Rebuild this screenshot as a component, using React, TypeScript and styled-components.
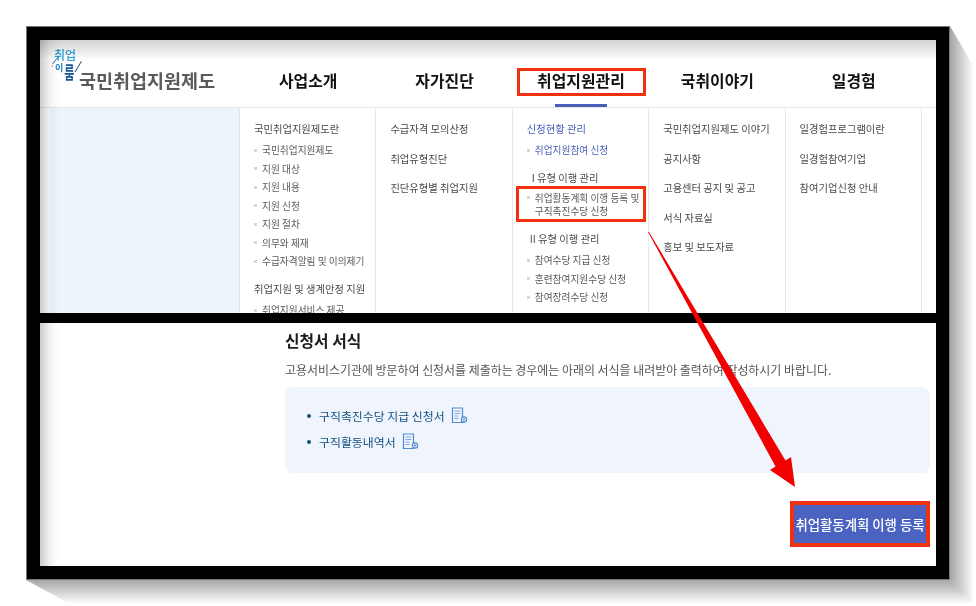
import React from "react";
import styled, { createGlobalStyle, css } from "styled-components";

const Global = createGlobalStyle`
  html, body { margin: 0; padding: 0; background: #fff; }
  body { font-family: "Noto Sans CJK KR", "Noto Sans", sans-serif; overflow: hidden; }
`;

const Page = styled.div`
  position: relative;
  width: 976px;
  height: 606px;
  padding: 26px;
  box-sizing: border-box;
  overflow: hidden;
`;

const RightShadow = styled.div`
  position: absolute;
  left: 950px;
  top: 26px;
  width: 24px;
  height: 578px;
  background: linear-gradient(to right, #a6a6a6, #e8e8e8 75%, #fff);
  clip-path: polygon(0 0, 100% 41px, 100% 100%, 0 554px);
`;

const BottomShadow = styled.div`
  position: absolute;
  left: 26px;
  top: 580px;
  width: 948px;
  height: 24px;
  background: linear-gradient(to bottom, #a6a6a6, #e8e8e8 75%, #fff);
  clip-path: polygon(0 0, 924px 0, 100% 100%, 44px 100%);
`;

const Frame = styled.div`
  position: relative;
  width: 924px;
  height: 554px;
  box-sizing: border-box;
  border: 14px solid #000;
  outline: 1px solid #777;
  outline-offset: -1px;
  display: flex;
  flex-direction: column;
  background: #fff;
`;

const Section = styled.section<{ $top?: boolean }>`
  position: relative;
  overflow: hidden;
  background: #fff;
  filter: blur(0.45px);
  ${(p) =>
    p.$top
      ? css`
          height: 273px;
          flex: none;
        `
      : css`
          flex: 1;
        `}
  &::after {
    content: "";
    position: absolute;
    inset: 0;
    pointer-events: none;
    background: linear-gradient(to right, rgba(0, 0, 0, 0.2), rgba(0, 0, 0, 0.05) 10px, rgba(0, 0, 0, 0) 19px)
      ${(p) => (p.$top ? ", linear-gradient(to bottom, rgba(0,0,0,0.18), rgba(0,0,0,0) 20px)" : "")};
  }
`;

const Divider = styled.div`
  height: 10px;
  flex: none;
  background: #000;
`;

const grid = css`
  display: grid;
  grid-template-columns: 200px repeat(5, 136.4px);
`;

const Header = styled.header`
  ${grid}
  height: 68px;
  box-sizing: border-box;
  border-bottom: 1px solid #e6e6e6;
`;

const Logo = styled.div`
  display: flex;
  align-items: flex-end;
  padding-left: 12px;
  height: 67px;
  box-sizing: border-box;
  padding-bottom: 16px;
`;

const LogoMark = styled.div`
  position: relative;
  width: 27px;
  height: 36px;
  display: flex;
  flex-direction: column;
  align-items: flex-start;
  margin-bottom: 7px;
  flex: none;
`;

const MarkTop = styled.span`
  font-size: 12px;
  line-height: 14px;
  font-weight: 500;
  color: #2ba3d8;
  padding-left: 2px;
  white-space: nowrap;
`;

const MarkBottom = styled.span`
  display: flex;
  align-items: flex-start;
  margin-top: 1px;
  font-size: 9px;
  line-height: 10px;
  font-weight: 700;
  color: #1f7fc0;
  padding-left: 3px;
  white-space: nowrap;
`;

const MarkTall = styled.span`
  display: block;
  font-size: 11px;
  line-height: 10px;
  color: #17518f;
  transform: scaleY(1.6);
  transform-origin: 50% 0;
  margin-left: 1px;
`;

const MarkSlash = styled.svg`
  position: absolute;
  left: 0;
  top: 0;
`;

const LogoText = styled.span`
  font-size: 18.5px;
  line-height: 22px;
  font-weight: 700;
  color: #5a5a5a;
  white-space: nowrap;
`;

const NavItem = styled.div<{ $active?: boolean }>`
  position: relative;
  height: 67px;
  box-sizing: border-box;
  padding-top: 13px;
  display: flex;
  align-items: center;
  justify-content: center;
  font-size: 15.9px;
  font-weight: 700;
  color: #111;
  ${(p) =>
    p.$active &&
    css`
      &::after {
        content: "";
        position: absolute;
        left: 42px;
        bottom: 0;
        width: 52px;
        height: 3px;
        background: #4a5fb8;
      }
    `}
`;

const Menu = styled.div`
  ${grid}
  height: 205px;
`;

const Gutter = styled.div`
  padding-left: 10px;
  border-right: 1px solid #e6e6e6;
  &::before {
    content: "";
    display: block;
    height: 100%;
    background: #eef4fc;
  }
`;

const Column = styled.div`
  box-sizing: border-box;
  padding: 12px 0 0 14px;
  border-right: 1px solid #e9e9e9;
`;

const Title = styled.div<{ $blue?: boolean; $indent?: number; $gap?: number }>`
  height: 18px;
  line-height: 18px;
  font-size: 10.3px;
  color: ${(p) => (p.$blue ? "#4a5fb8" : "#4a4a4a")};
  white-space: nowrap;
  margin-left: ${(p) => p.$indent ?? 0}px;
  margin-top: ${(p) => p.$gap ?? 0}px;
`;

const SubList = styled.ul`
  list-style: none;
  margin: 3px 0 0;
  padding: 0;
`;

const SubItem = styled.li<{ $blue?: boolean; $multi?: boolean }>`
  display: flex;
  gap: 5px;
  min-height: 18.5px;
  line-height: ${(p) => (p.$multi ? "12.5px" : "18.5px")};
  padding: ${(p) => (p.$multi ? "2px 0 3px" : "0")};
  font-size: 9.7px;
  color: ${(p) => (p.$blue ? "#4a5fb8" : "#5a5a5a")};
  white-space: nowrap;
  &::before {
    content: "";
    flex: none;
    width: 3px;
    height: 3px;
    margin-top: ${(p) => (p.$multi ? "4px" : "7.5px")};
    background: #d8d8d8;
  }
`;

const Highlight = styled.div<{ $x: number; $y: number; $w: number; $h: number }>`
  position: absolute;
  left: ${(p) => p.$x}px;
  top: ${(p) => p.$y}px;
  width: ${(p) => p.$w}px;
  height: ${(p) => p.$h}px;
  box-sizing: border-box;
  border: 3px solid #f0300f;
  pointer-events: none;
`;

const ArrowLayer = styled.svg`
  position: absolute;
  left: 0;
  top: 0;
  pointer-events: none;
`;

const Body = styled.div`
  padding: 8px 6px 0 245px;
  display: flex;
  flex-direction: column;
`;

const Heading = styled.h2`
  margin: 0;
  font-size: 15.8px;
  line-height: 20px;
  font-weight: 700;
  color: #1c1c1c;
`;

const Lead = styled.p`
  margin: 10px 0 0;
  font-size: 11.94px;
  line-height: 18px;
  color: #555;
  white-space: nowrap;
`;

const Notice = styled.div`
  margin-top: 8px;
  height: 86px;
  box-sizing: border-box;
  border-radius: 8px;
  background: #eff4fd;
  padding: 17px 0 0 22px;
  display: flex;
  flex-direction: column;
  gap: 3px;
`;

const NoticeRow = styled.div`
  display: flex;
  align-items: center;
  height: 23px;
  font-size: 11.9px;
  color: #14507f;
  white-space: nowrap;
  &::before {
    content: "";
    width: 4px;
    height: 4px;
    border-radius: 50%;
    background: #14507f;
    margin-right: 8px;
  }
`;

const DocIcon = styled.svg`
  margin-left: 6px;
  flex: none;
`;

const Actions = styled.div`
  display: flex;
  justify-content: flex-end;
  margin-top: 28px;
`;

const PrimaryButton = styled.button`
  width: 140px;
  height: 46px;
  box-sizing: border-box;
  border: 4px solid #f0300f;
  background: #4a63c0;
  color: #fff;
  font-family: inherit;
  font-size: 13.4px;
  font-weight: 500;
  padding: 0;
  white-space: nowrap;
`;

const Doc = () => (
  <DocIcon width="17" height="17" viewBox="0 0 17 17" fill="none" stroke="#4f8ad2" strokeWidth="1.2">
    <path d="M1.5 1h10v14.5h-10z" />
    <path d="M3.5 4h6M3.5 6.5h6M3.5 9h4M3.5 11.5h4" stroke="#7fa8da" strokeWidth="1" />
    <circle cx="13" cy="12.5" r="2.6" fill="#eff4fd" />
    <circle cx="13" cy="12.5" r="1" fill="#4f8ad2" stroke="none" />
  </DocIcon>
);

const nav = ["사업소개", "자가진단", "취업지원관리", "국취이야기", "일경험"];

const col1a = ["국민취업지원제도", "지원 대상", "지원 내용", "지원 신청", "지원 절차", "의무와 제재", "수급자격알림 및 이의제기"];
const col2 = ["수급자격 모의산정", "취업유형진단", "진단유형별 취업지원"];
const col4 = ["국민취업지원제도 이야기", "공지사항", "고용센터 공지 및 공고", "서식 자료실", "홍보 및 보도자료"];
const col5 = ["일경험프로그램이란", "일경험참여기업", "참여기업신청 안내"];
const col3b = ["참여수당 지급 신청", "훈련참여지원수당 신청", "참여장려수당 신청"];

const Links = ({ items }: { items: string[] }) => (
  <Column>
    {items.map((t, i) => (
      <Title key={t} $gap={i ? 11.5 : 0}>
        {t}
      </Title>
    ))}
  </Column>
);

export default function App() {
  return (
    <Page>
      <Global />
      <RightShadow />
      <BottomShadow />
      <Frame>
        <Section $top>
          <Header>
            <Logo>
              <LogoMark>
                <MarkTop>취업</MarkTop>
                <MarkBottom>
                  이<MarkTall>룸</MarkTall>
                </MarkBottom>
                <MarkSlash width="30" height="30" viewBox="0 0 30 30" fill="none">
                  <path d="M0.5 16 L7 8" stroke="#1f6fb5" strokeWidth="1" />
                  <path d="M23 24 L29 14" stroke="#17518f" strokeWidth="1" />
                  <circle cx="0" cy="18" r="1" fill="#e8833a" />
                  <circle cx="29" cy="14" r="0.8" fill="#e0503a" />
                </MarkSlash>
              </LogoMark>
              <LogoText>국민취업지원제도</LogoText>
            </Logo>
            {nav.map((n, i) => (
              <NavItem key={n} $active={i === 2}>
                {n}
              </NavItem>
            ))}
          </Header>
          <Menu>
            <Gutter />
            <Column>
              <Title>국민취업지원제도란</Title>
              <SubList>
                {col1a.map((t) => (
                  <SubItem key={t}>{t}</SubItem>
                ))}
              </SubList>
              <Title $gap={9.5}>취업지원 및 생계안정 지원</Title>
              <SubList>
                <SubItem>취업지원서비스 제공</SubItem>
              </SubList>
            </Column>
            <Links items={col2} />
            <Column>
              <Title $blue>신청현황 관리</Title>
              <SubList>
                <SubItem $blue>취업지원참여 신청</SubItem>
              </SubList>
              <Title $gap={9.5} $indent={5}>
                I 유형 이행 관리
              </Title>
              <SubList>
                <SubItem $multi>
                  <span>
                    취업활동계획 이행 등록 및
                    <br />
                    구직촉진수당 신청
                  </span>
                </SubItem>
              </SubList>
              <Title $gap={10} $indent={3}>
                II 유형 이행 관리
              </Title>
              <SubList>
                {col3b.map((t) => (
                  <SubItem key={t}>{t}</SubItem>
                ))}
              </SubList>
            </Column>
            <Links items={col4} />
            <Links items={col5} />
          </Menu>
        </Section>
        <Divider />
        <Section>
          <Body>
            <Heading>신청서 서식</Heading>
            <Lead>고용서비스기관에 방문하여 신청서를 제출하는 경우에는 아래의 서식을 내려받아 출력하여 작성하시기 바랍니다.</Lead>
            <Notice>
              <NoticeRow>
                구직촉진수당 지급 신청서
                <Doc />
              </NoticeRow>
              <NoticeRow>
                구직활동내역서
                <Doc />
              </NoticeRow>
            </Notice>
            <Actions>
              <PrimaryButton>취업활동계획 이행 등록</PrimaryButton>
            </Actions>
          </Body>
        </Section>
        <Highlight $x={477} $y={28} $w={129} $h={28} />
        <Highlight $x={476} $y={146} $w={130} $h={36} />
      </Frame>
      <ArrowLayer width="976" height="606" viewBox="0 0 976 606">
        <path d="M648 232 L649 232 L785.5 460.5 L791 457 L795 487 L770 470 L775.5 466.5 Z" fill="#f20000" />
      </ArrowLayer>
    </Page>
  );
}
